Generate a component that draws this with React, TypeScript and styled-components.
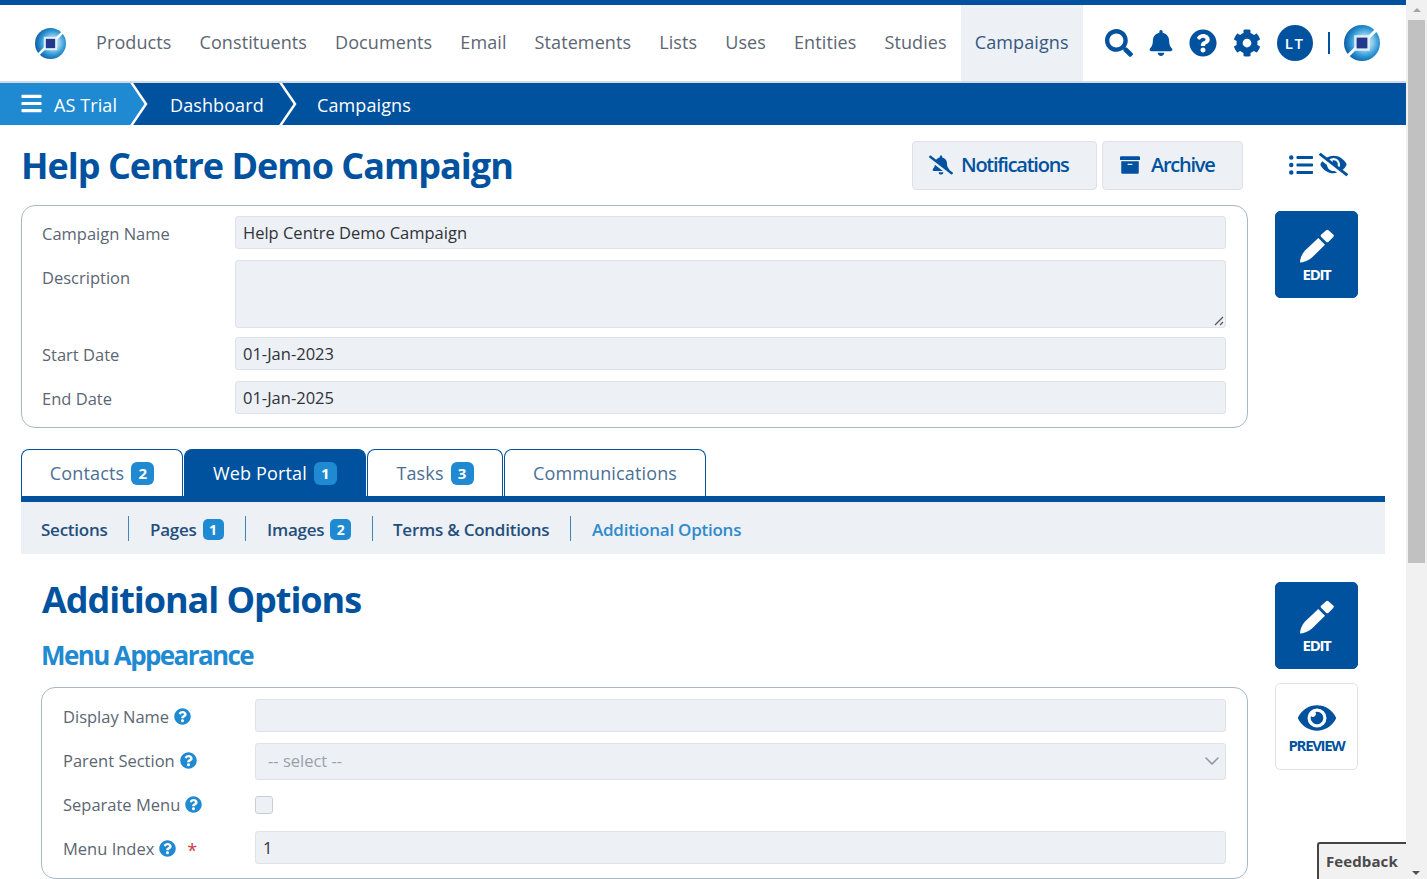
import React from "react";
import styled, { createGlobalStyle } from "styled-components";
import { FaSearch, FaBell, FaQuestionCircle, FaCog, FaBellSlash, FaArchive, FaListUl, FaEyeSlash, FaEye, FaBars } from "react-icons/fa";
import { ChevronDown } from "lucide-react";

const NAVY = "#00529f";
const SKY = "#1f8ad2";
const FIELD = "#edf0f5";

const Global = createGlobalStyle`
  html, body { margin: 0; padding: 0; height: 100%; overflow: hidden; background: #fff; }
  body { font-family: "Open Sans", "Liberation Sans", sans-serif; }
  #root { height: 100%; }
  * { box-sizing: border-box; }
`;

const Shell = styled.div`
  display: flex;
  height: 879px;
  overflow: hidden;
  position: relative;
`;
const Page = styled.div`
  width: 1406px;
  flex: none;
  height: 879px;
  overflow: hidden;
`;
const ScrollTrack = styled.div`
  width: 21px;
  flex: none;
  background: #f1f1f1;
  display: flex;
  flex-direction: column;
  align-items: center;
  position: relative;
`;
const ScrollUp = styled.div`
  height: 20px;
  display: flex;
  align-items: center;
  justify-content: center;
  &::before {
    content: "";
    border-left: 4px solid transparent;
    border-right: 4px solid transparent;
    border-bottom: 4px solid #a3a3a3;
  }
`;
const ScrollThumb = styled.div`
  width: 17px;
  height: 543px;
  background: #c1c1c1;
`;
const ScrollDown = styled.div`
  position: absolute;
  bottom: 4px;
  left: 6px;
  border-left: 4px solid transparent;
  border-right: 4px solid transparent;
  border-top: 4px solid #505050;
`;

const TopNav = styled.header`
  height: 83px;
  border-top: 5px solid ${NAVY};
  border-bottom: 2px solid #d3dae3;
  display: flex;
  align-items: stretch;
  padding-left: 35px;
`;
const LogoSlot = styled.div`
  width: 47px;
  display: flex;
  align-items: center;
  flex: none;
`;
const NavLinks = styled.nav`
  display: flex;
  align-items: stretch;
`;
const NavLink = styled.a<{ $active?: boolean }>`
  display: flex;
  align-items: center;
  padding: 0 14px 2px;
  font-size: 18px;
  letter-spacing: 0.1px;
  color: ${(p) => (p.$active ? "#34597f" : "#5b6672")};
  background: ${(p) => (p.$active ? FIELD : "transparent")};
`;
const NavTools = styled.div`
  display: flex;
  align-items: center;
  margin-left: 22px;
  color: ${NAVY};
`;
const ToolIcon = styled.span<{ $gap?: number }>`
  width: 28px;
  margin-left: ${(p) => p.$gap ?? 0}px;
  display: flex;
  justify-content: center;
  align-items: center;
  font-size: 28px;
`;
const Avatar = styled.div`
  width: 36px;
  height: 36px;
  border-radius: 50%;
  background: ${NAVY};
  color: #fff;
  font-size: 15px;
  font-weight: 600;
  letter-spacing: 1.5px;
  display: flex;
  align-items: center;
  justify-content: center;
  margin-left: 16px;
`;
const VDivider = styled.div`
  width: 2px;
  height: 22px;
  background: ${NAVY};
  margin: 0 14px 0 15px;
`;

const Crumbs = styled.div`
  height: 42px;
  background: ${NAVY};
  display: flex;
  color: #fff;
  font-size: 18px;
  letter-spacing: 0.1px;
  overflow: hidden;
`;
const CrumbHome = styled.div`
  width: 130px;
  background: ${SKY};
  display: flex;
  align-items: center;
  padding: 1px 0 0 20px;
  gap: 11px;
  flex: none;
  svg { font-size: 23px; flex: none; margin-top: -2px; }
`;
const Crumb = styled.div<{ $w: number; $pad: number }>`
  width: ${(p) => p.$w}px;
  display: flex;
  align-items: center;
  padding: 1px 0 0 ${(p) => p.$pad}px;
  flex: none;
`;
const Chevron = styled.svg`
  width: 17px;
  height: 42px;
  flex: none;
  overflow: visible;
  position: relative;
  z-index: 1;
`;

const Top = styled.section`
  display: flex;
  padding: 16px 0 0 21px;
`;
const MainCol = styled.div`
  width: 1227px;
  flex: none;
`;
const TitleRow = styled.div`
  display: flex;
  align-items: center;
  justify-content: space-between;
  height: 49px;
  padding-right: 5px;
  margin-bottom: 15px;
`;
const Title = styled.h1`
  margin: 0;
  font-size: 36px;
  font-weight: 700;
  color: ${NAVY};
  letter-spacing: -1px;
  line-height: 49px;
`;
const Actions = styled.div`
  display: flex;
  gap: 5px;
`;
const ActionBtn = styled.button<{ $w: number; $pad: number; $gap: number }>`
  width: ${(p) => p.$w}px;
  height: 49px;
  background: ${FIELD};
  border: 1px solid #dde1e7;
  border-radius: 4px;
  color: ${NAVY};
  font: 600 20px "Open Sans", sans-serif;
  letter-spacing: -1.25px;
  display: flex;
  align-items: center;
  padding: 0 0 2px ${(p) => p.$pad}px;
  gap: ${(p) => p.$gap}px;
  svg { font-size: 20px; flex: none; margin-top: 1px; }
`;
const Card = styled.div<{ $h: number }>`
  border: 1px solid #a9b8c6;
  border-radius: 14px;
  height: ${(p) => p.$h}px;
  display: flex;
  flex-direction: column;
  background: #fff;
  padding-top: ${(p) => (p.$h > 200 ? 10 : 11)}px;
`;
const Row = styled.div<{ $mb: number; $label: number; $field: number; $pad: number; $h?: number }>`
  display: grid;
  grid-template-columns: ${(p) => p.$label}px ${(p) => p.$field}px;
  margin-bottom: ${(p) => p.$mb}px;
  padding-left: ${(p) => p.$pad}px;
  min-height: ${(p) => p.$h ?? 33}px;
`;
const Label = styled.label`
  font-size: 16.5px;
  color: #5b6672;
  line-height: 22px;
  padding-top: 7px;
  display: flex;
  gap: 5px;
  align-items: flex-start;
  white-space: nowrap;
`;
const Field = styled.div<{ $h?: number; $muted?: boolean }>`
  height: ${(p) => p.$h ?? 33}px;
  background: ${FIELD};
  border: 1px solid #dfe3e9;
  border-radius: 3px;
  font-size: 16.5px;
  color: ${(p) => (p.$muted ? "#9aa1a9" : "#2f3338")};
  padding: 4px 7px;
  line-height: 23px;
  position: relative;
`;
const Grip = styled.svg`
  position: absolute;
  right: 1px;
  bottom: 1px;
  width: 12px;
  height: 12px;
`;
const SelectField = styled(Field)`
  padding: 0 1px 2px 12px;
  display: flex;
  align-items: center;
  justify-content: space-between;
  svg { color: #8c939b; flex: none; }
`;
const Help = styled.span`
  color: ${SKY};
  font-size: 17px;
  display: inline-flex;
  margin-top: 2px;
  background: radial-gradient(circle, #fff 55%, transparent 56%);
`;
const Star = styled.span`
  color: #d03a3a;
  font-size: 18px;
  margin-left: 6px;
  line-height: 24px;
`;
const Check = styled.div`
  width: 18px;
  height: 18px;
  background: ${FIELD};
  border: 1px solid #c9ced5;
  border-radius: 3px;
  margin-top: 9px;
`;

const SideCol = styled.aside`
  margin-left: 27px;
  width: 83px;
  display: flex;
  flex-direction: column;
`;
const ViewIcons = styled.div`
  height: 49px;
  margin-bottom: 21px;
  display: flex;
  align-items: center;
  justify-content: flex-start;
  gap: 6px;
  color: ${NAVY};
  font-size: 24px;
  width: 90px;
  padding: 0 0 2px 14px;
  svg { flex: none; }
`;
const Tile = styled.button<{ $ghost?: boolean }>`
  width: 83px;
  height: 87px;
  border-radius: 5px;
  border: 1px solid ${(p) => (p.$ghost ? "#dfe3e8" : NAVY)};
  background: ${(p) => (p.$ghost ? "#fff" : NAVY)};
  color: ${(p) => (p.$ghost ? NAVY : "#fff")};
  font: 700 15px "Open Sans", sans-serif;
  letter-spacing: -1.35px;
  display: flex;
  flex-direction: column;
  align-items: center;
  padding: ${(p) => (p.$ghost ? 15 : 17)}px 0 0;
  line-height: 20px;
  gap: ${(p) => (p.$ghost ? 0 : 1)}px;
  svg { flex: none; margin-bottom: ${(p) => (p.$ghost ? -2 : 0)}px; }
`;

const TabsWrap = styled.div`
  margin: 21px 21px 0;
  width: 1364px;
`;
const TabBar = styled.div`
  display: flex;
  gap: 1px;
  height: 47px;
`;
const Tab = styled.div<{ $w: number; $active?: boolean }>`
  width: ${(p) => p.$w}px;
  height: 47px;
  border: 1px solid ${NAVY};
  border-bottom: 0;
  border-radius: 8px 8px 0 0;
  background: ${(p) => (p.$active ? NAVY : "#fff")};
  color: ${(p) => (p.$active ? "#fff" : "#4a6f95")};
  font-size: 18px;
  letter-spacing: 0.14px;
  display: flex;
  align-items: center;
  justify-content: center;
  gap: 7px;
`;
const Badge = styled.span`
  width: 23px;
  height: 23px;
  border-radius: 6px;
  background: ${SKY};
  color: #fff;
  font-size: 15px;
  font-weight: 700;
  letter-spacing: 0;
  display: inline-flex;
  align-items: center;
  justify-content: center;
`;
const SmallBadge = styled(Badge)`
  width: 21px;
  height: 21px;
  font-size: 14px;
  border-radius: 5px;
`;
const SubNav = styled.div`
  height: 58px;
  border-top: 6px solid ${NAVY};
  background: ${FIELD};
  display: flex;
  align-items: center;
`;
const SubItem = styled.a<{ $on?: boolean; $w: number; $last?: boolean; $pad?: number }>`
  width: ${(p) => p.$w}px;
  height: 25px;
  flex: none;
  border-right: ${(p) => (p.$last ? "0" : "1px solid #3f86bd")};
  padding: 2px 0 0 ${(p) => p.$pad ?? 21}px;
  font-size: 17px;
  font-weight: 600;
  letter-spacing: -0.25px;
  color: ${(p) => (p.$on ? "#2e8bcb" : "#244f7c")};
  display: flex;
  align-items: center;
  gap: 6px;
  white-space: nowrap;
`;

const Lower = styled.section`
  display: flex;
  padding-left: 41px;
  padding-top: 20px;
`;
const LowerMain = styled.div`
  width: 1207px;
  flex: none;
`;
const H2 = styled.h2`
  margin: 0;
  font-size: 36px;
  line-height: 52px;
  font-weight: 700;
  color: ${NAVY};
  letter-spacing: -1.05px;
  padding-left: 1px;
`;
const H3 = styled.h3`
  margin: 11px 0 14px;
  font-size: 26px;
  line-height: 36px;
  font-weight: 700;
  color: ${SKY};
  letter-spacing: -1.6px;
`;
const LowerSide = styled.aside`
  margin-left: 27px;
  padding-top: 8px;
  display: flex;
  flex-direction: column;
  gap: 14px;
`;
const Feedback = styled.div`
  position: absolute;
  left: 1317px;
  top: 842px;
  width: 89px;
  height: 37px;
  background: #f1f1f1;
  border-top: 2px solid #444;
  border-left: 2px solid #444;
  border-top-left-radius: 3px;
  font-size: 15px;
  font-weight: 700;
  letter-spacing: 0.1px;
  color: #4a4a4a;
  padding: 7px 0 0 7px;
  line-height: 20px;
`;

const Logo = ({ size }: { size: number }) => {
  const id = `lg${size}`;
  return (
    <svg width={size} height={size} viewBox="0 0 60 60">
      <defs>
        <radialGradient id={id} cx="58%" cy="48%" r="62%">
          <stop offset="0%" stopColor="#eaf6fc" />
          <stop offset="35%" stopColor="#8ecbec" />
          <stop offset="65%" stopColor="#2a93d2" />
          <stop offset="100%" stopColor="#0a4f96" />
        </radialGradient>
      </defs>
      <circle cx="30" cy="30" r="30" fill={`url(#${id})`} />
      <path d="M4 54 L21 37 M39 23 L56 6" stroke="#fff" strokeWidth="5" />
      <rect x="17" y="17" width="26" height="26" fill="#e6f3fb" opacity=".9" />
      <rect x="21" y="21" width="18" height="18" fill="#23388c" />
    </svg>
  );
};

const PenIcon = () => (
  <svg width="34" height="34" viewBox="0 0 34 34" fill="currentColor">
    <path d="M18.3 9 L25 15.7 L12 28.5 C8 31.8 3 33.5 0 33.5 C0 30 1.5 25.5 5 21.5 Z" />
    <path d="M22.5 6.7 L27.3 2.5 L32 6.7 L27.3 11.5 Z" stroke="currentColor" strokeWidth="3.5" strokeLinejoin="round" />
  </svg>
);

const CrumbSep = ({ fill }: { fill: string }) => (
  <Chevron viewBox="0 0 17 42">
    <path d="M0 0 L16 21 L0 42 Z" fill={fill} />
    <path d="M1 -1 L16 21 L1 43" fill="none" stroke="#fff" strokeWidth="2.5" />
  </Chevron>
);

const Q = () => (
  <Help>
    <FaQuestionCircle />
  </Help>
);

const NAV = ["Products", "Constituents", "Documents", "Email", "Statements", "Lists", "Uses", "Entities", "Studies"];

export default function App() {
  return (
    <Shell>
      <Global />
      <Page>
        <TopNav>
          <LogoSlot>
            <Logo size={31} />
          </LogoSlot>
          <NavLinks>
            {NAV.map((n) => (
              <NavLink key={n}>{n}</NavLink>
            ))}
            <NavLink $active>Campaigns</NavLink>
          </NavLinks>
          <NavTools>
            <ToolIcon><FaSearch /></ToolIcon>
            <ToolIcon $gap={14}><FaBell size={26} /></ToolIcon>
            <ToolIcon $gap={14}><FaQuestionCircle /></ToolIcon>
            <ToolIcon $gap={16}><FaCog /></ToolIcon>
            <Avatar>LT</Avatar>
            <VDivider />
            <Logo size={36} />
          </NavTools>
        </TopNav>
        <Crumbs>
          <CrumbHome>
            <FaBars />
            AS Trial
          </CrumbHome>
          <CrumbSep fill={SKY} />
          <Crumb $w={132} $pad={23}>Dashboard</Crumb>
          <CrumbSep fill={NAVY} />
          <Crumb $w={200} $pad={21}>Campaigns</Crumb>
        </Crumbs>

        <Top>
          <MainCol>
            <TitleRow>
              <Title>Help Centre Demo Campaign</Title>
              <Actions>
                <ActionBtn $w={185} $pad={16} $gap={8}><FaBellSlash size={24} />Notifications</ActionBtn>
                <ActionBtn $w={141} $pad={17} $gap={11}><FaArchive />Archive</ActionBtn>
              </Actions>
            </TitleRow>
            <Card $h={223}>
              <Row $mb={11} $label={193} $field={991} $pad={20}>
                <Label>Campaign Name</Label>
                <Field>Help Centre Demo Campaign</Field>
              </Row>
              <Row $mb={9} $label={193} $field={991} $pad={20} $h={68}>
                <Label>Description</Label>
                <Field $h={68}>
                  <Grip viewBox="0 0 12 12">
                    <path d="M3 11 L11 3 M8 11 L11 8" stroke="#555" strokeWidth="1.2" />
                  </Grip>
                </Field>
              </Row>
              <Row $mb={11} $label={193} $field={991} $pad={20}>
                <Label>Start Date</Label>
                <Field>01-Jan-2023</Field>
              </Row>
              <Row $mb={0} $label={193} $field={991} $pad={20}>
                <Label>End Date</Label>
                <Field>01-Jan-2025</Field>
              </Row>
            </Card>
          </MainCol>
          <SideCol>
            <ViewIcons>
              <FaListUl />
              <FaEyeSlash size={29} />
            </ViewIcons>
            <Tile>
              <PenIcon />
              EDIT
            </Tile>
          </SideCol>
        </Top>

        <TabsWrap>
          <TabBar>
            <Tab $w={162}>Contacts <Badge>2</Badge></Tab>
            <Tab $w={182} $active>Web Portal <Badge>1</Badge></Tab>
            <Tab $w={136}>Tasks <Badge>3</Badge></Tab>
            <Tab $w={202}>Communications</Tab>
          </TabBar>
          <SubNav>
            <SubItem $w={108} $pad={20}>Sections</SubItem>
            <SubItem $w={117}>Pages <SmallBadge>1</SmallBadge></SubItem>
            <SubItem $w={127}>Images <SmallBadge>2</SmallBadge></SubItem>
            <SubItem $w={198} $pad={20}>Terms &amp; Conditions</SubItem>
            <SubItem $w={200} $on $last>Additional Options</SubItem>
          </SubNav>
        </TabsWrap>

        <Lower>
          <LowerMain>
            <H2>Additional Options</H2>
            <H3>Menu Appearance</H3>
            <Card $h={192}>
              <Row $mb={11} $label={192} $field={971} $pad={21}>
                <Label>Display Name <Q /></Label>
                <Field />
              </Row>
              <Row $mb={7} $label={192} $field={971} $pad={21} $h={37}>
                <Label>Parent Section <Q /></Label>
                <SelectField $h={37} $muted>
                  -- select --
                  <ChevronDown size={24} strokeWidth={1.5} />
                </SelectField>
              </Row>
              <Row $mb={11} $label={192} $field={971} $pad={21}>
                <Label>Separate Menu <Q /></Label>
                <Check />
              </Row>
              <Row $mb={0} $label={192} $field={971} $pad={21}>
                <Label>Menu Index <Q /><Star>*</Star></Label>
                <Field>1</Field>
              </Row>
            </Card>
          </LowerMain>
          <LowerSide>
            <Tile>
              <PenIcon />
              EDIT
            </Tile>
            <Tile $ghost>
              <FaEye size={38} />
              PREVIEW
            </Tile>
          </LowerSide>
        </Lower>
      </Page>
      <ScrollTrack>
        <ScrollUp />
        <ScrollThumb />
        <ScrollDown />
      </ScrollTrack>
      <Feedback>Feedback</Feedback>
    </Shell>
  );
}
